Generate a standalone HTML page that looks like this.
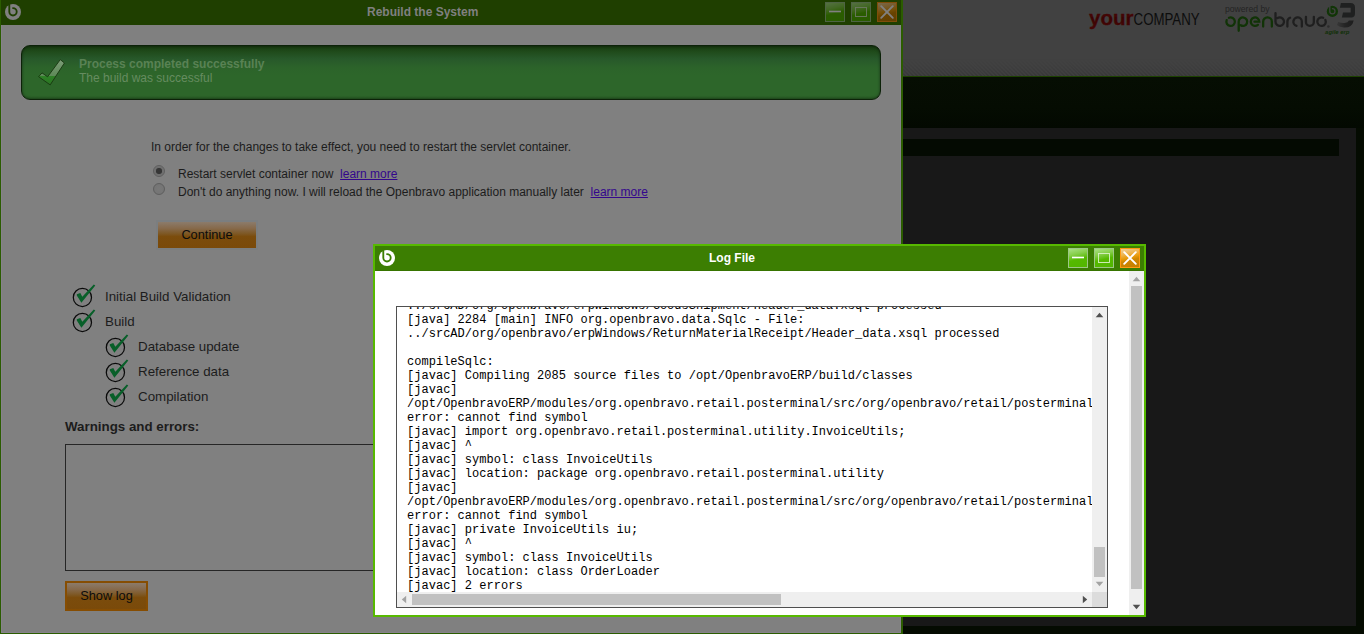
<!DOCTYPE html>
<html>
<head>
<meta charset="utf-8">
<title>Rebuild the System</title>
<style>
*{box-sizing:border-box;margin:0;padding:0}
html,body{width:1364px;height:634px;overflow:hidden;background:#040b01;font-family:"Liberation Sans",sans-serif;font-size:12px;color:#1c1c1c}
.abs{position:absolute}
/* ---------- background page (dimmed twice) ---------- */
#topbar{left:0;top:0;width:1364px;height:76px;background:#414141}
#hatch{left:0;top:58px;width:1364px;height:18px;background:linear-gradient(to bottom,rgba(0,0,0,0),rgba(0,0,8,0.10)),repeating-linear-gradient(45deg,rgba(255,255,255,0.02) 0 1.4px,rgba(0,0,0,0.035) 1.4px 2.8px);-webkit-mask-image:linear-gradient(to bottom,transparent,#000);mask-image:linear-gradient(to bottom,transparent,#000)}
#greenline{left:0;top:76px;width:1364px;height:1px;background:#1c4100}
#band{left:0;top:77px;width:1364px;height:51px;background:linear-gradient(to bottom,#060e03 0%,#050c02 60%,#030901 100%)}
#panel{left:903px;top:128px;width:453px;height:498px;background:#181818}
#strip{left:903px;top:139px;width:436px;height:17px;background:#040a02}
/* ---------- Rebuild window (dimmed once) ---------- */
#win1{left:0;top:0;width:903px;height:634px;background:#808080;border-left:1px solid #2b5c00;border-right:2px solid #2b5c00;border-bottom:1px solid #2b5c00}
#tb1{left:1px;top:0;width:900px;height:25px;background:#1f3f00}
.title{font-weight:bold;font-size:12px;line-height:14px;white-space:nowrap}
/* window buttons */
.wb{width:20px;height:20px}

.wbtn{width:20px;height:20px;border:1px solid #9dc786}
.wbtn.g{background:linear-gradient(166deg,#a9e184 0%,#86cf4a 30%,#62bf14 50%,#55b900 56%,#52b600 100%)}
.wbtn.o{border-color:#ff9a12;background:linear-gradient(166deg,#f2cf96 0%,#eeb550 28%,#e89a08 48%,#cf8600 60%,#c47e00 100%)}
.wbtn svg{position:absolute;left:-1px;top:-1px}
.dim{filter:brightness(0.5)}
#msg{left:21px;top:45px;width:860px;height:55px;border-radius:9px;border:1px solid #0c2208;background:linear-gradient(to bottom,#17390f 0%,#1f4a1a 10%,#27582a 24%,#2c632a 40%,#2d662a 55%,#2d662a 93%,#275a24 100%);box-shadow:inset 0 0 3px rgba(0,0,0,0.5)}
.t12{font-size:12px;line-height:14px;white-space:nowrap}
.t13{font-size:13.33px;line-height:15px;white-space:nowrap}
a.lm{color:#33078c;text-decoration:underline}
.radio{width:12px;height:12px;border-radius:50%;border:1px solid #5e5e5e;background:radial-gradient(circle at 50% 50%,#787878 0%,#757575 65%,#6e6e6e 100%)}
.obtn{border:2px solid #7b7e80;background:linear-gradient(to bottom,#8b7b6b 0%,#86694a 25%,#7e5824 45%,#7b4c0c 56%,#7a4a0a 100%);text-align:center;font-size:12.8px;color:#0c0c0c}
/* ---------- Log window ---------- */
#win2{left:373px;top:244px;width:773px;height:373px;background:#fff;border:2px solid #57b900}
#tb2{left:0;top:0;width:769px;height:25px;background:#3c7e02;border-bottom:1px solid #377400}

#logbox{left:21px;top:60px;width:712px;height:302px;border:1px solid #4f4f4f;background:#fff;overflow:hidden}
#logtxt{left:10px;top:-8px;font-family:"Liberation Mono",monospace;font-size:12px;line-height:14px;color:#000;white-space:pre;letter-spacing:0.024px}
.sbt{background:#efefef}
.thumb{background:#c1c1c1}
</style>
</head>
<body>
<svg width="0" height="0" style="position:absolute">
<defs>
<symbol id="oblogo" viewBox="0 0 24 24">
<circle cx="12" cy="12" r="8" fill="var(--fg)"/>
<path d="M8.3 3 L8.3 11.8 A3.7 3.7 0 1 0 12 8.1" fill="none" stroke="var(--bg)" stroke-width="1.85" stroke-linecap="round"/>
</symbol>
<symbol id="stepok" viewBox="0 0 26 26">
<circle cx="10.4" cy="15.4" r="9.1" fill="none" stroke="#0a0a0a" stroke-width="1.25"/>
<path d="M4.8 12.3 L8.3 11 L10.3 14.8 L21.8 2.6 L23.3 3.4 L9.4 20.8 L4.8 13.5 Z" fill="#085f29"/>
</symbol>
</defs>
</svg>
<!-- background page -->
<div id="topbar" class="abs"></div>
<div id="hatch" class="abs"></div>
<div id="greenline" class="abs"></div>
<div id="band" class="abs"></div>
<div id="panel" class="abs"></div>
<div id="strip" class="abs"></div>
<svg class="abs" style="left:1080px;top:0" width="284" height="45" viewBox="1080 0 284 45">
<defs><linearGradient id="yrg" x1="0" y1="0" x2="0" y2="1"><stop offset="0" stop-color="#4e0a0a"/><stop offset="0.5" stop-color="#420505"/><stop offset="0.52" stop-color="#3a0303"/><stop offset="1" stop-color="#460606"/></linearGradient>
<linearGradient id="g3" x1="0" y1="0" x2="1" y2="0"><stop offset="0" stop-color="#383838"/><stop offset="0.5" stop-color="#242424"/><stop offset="1" stop-color="#1d1d1d"/></linearGradient></defs>
<text x="1089" y="24.6" font-family="Liberation Sans,sans-serif" font-weight="bold" font-size="21" textLength="44.5" lengthAdjust="spacingAndGlyphs" fill="url(#yrg)" stroke="#420505" stroke-width="0.3">your</text>
<text x="1133.6" y="24.6" font-family="Liberation Sans,sans-serif" font-size="15.8" textLength="66" lengthAdjust="spacingAndGlyphs" fill="#0d0d0d">COMPANY</text>
<text x="1225" y="11.5" font-family="Liberation Sans,sans-serif" font-size="8.4" textLength="44.6" lengthAdjust="spacingAndGlyphs" fill="#242424">powered by</text>
<g fill="none" stroke="#113307" stroke-width="2.3" stroke-linecap="round"><path d="M1229.01 17.76 A4.25 4.25 0 1 1 1226.66 20.11"/><path d="M1238.7 30.8 L1238.7 21.7 A4.25 4.25 0 1 1 1240.70 25.30"/><path d="M1254.45 21.7 L1259.30 21.7 A4.25 4.25 0 1 0 1257.89 24.86"/><path d="M1263.15 26.6 L1263.15 21.7 A4.35 4.35 0 0 1 1271.85 21.7 L1271.85 26.6"/></g>
<g fill="none" stroke="#1f1f1f" stroke-width="2.3" stroke-linecap="round"><path d="M1275.5 13.2 L1275.5 21.7 A4.25 4.25 0 1 0 1277.50 18.10"/><path d="M1287.4 26.6 L1287.4 21.7 A4.25 4.25 0 0 1 1290.06 17.76"/><path d="M1301.85 26.6 L1301.85 21.7 A4.25 4.25 0 1 0 1296.50 25.81"/><path d="M1305.95 16.8 L1305.95 22 A3.95 3.95 0 0 0 1313.85 22 L1313.85 16.8"/><path d="M1325.40 19.90 A4.25 4.25 0 1 1 1323.14 17.76"/></g>
<circle cx="1328.4" cy="26.5" r="1.25" fill="#2c2c2c"/>
<path d="M1340.9 3.1 L1350.5 3.1 Q1355 3.1 1355 7.6 L1355 13 Q1355 17.4 1352 17.4 L1341.9 17.4 L1343 12.4 L1350.7 12.4 L1350.7 7.7 L1339.9 7.7 Z" fill="#1f2020"/>
<path d="M1353.7 20.4 Q1352.2 27.8 1344 27.5 Q1339.5 27.3 1336.8 25 L1338.2 21.9 Q1341 23.2 1344.6 23 Q1348 22.8 1348.9 20.4 Z" fill="url(#g3)"/>
<text x="1325.1" y="33.8" font-family="Liberation Sans,sans-serif" font-size="6" font-weight="bold" font-style="italic" textLength="24.4" lengthAdjust="spacingAndGlyphs" fill="#103007">agile erp</text>
</svg>
<svg class="abs" style="left:1324.05px;top:2.6px;--fg:#113507;--bg:#414141" width="16.8" height="16.8"><use href="#oblogo"/></svg>


<!-- Rebuild the System window -->
<div id="win1" class="abs"></div>
<div class="abs" style="left:1px;top:25px;width:900px;height:608px;border:1px solid #86838b;border-top:none"></div>
<div id="tb1" class="abs"></div>

<svg class="abs" style="left:1px;top:0;--fg:#808080;--bg:#1f3f00" width="24" height="24"><use href="#oblogo"/></svg>
<div class="abs title" style="left:367px;top:5px;color:#808080">Rebuild the System</div>
<div class="abs dim" style="left:825px;top:2px"><div class="wbtn g abs" style="left:0;top:0"><svg width="20" height="20"><rect x="4" y="8.7" width="12" height="1.6" fill="#fff"/></svg></div>
<div class="wbtn g abs" style="left:26px;top:0"><svg width="20" height="20"><rect x="4.5" y="5.5" width="11" height="9" fill="none" stroke="#d9f0c6" stroke-width="0.9"/></svg></div>
<div class="wbtn o abs" style="left:52px;top:0"><svg width="20" height="20"><path d="M4.2 4.2 L15.8 15.8 M15.8 4.2 L4.2 15.8" stroke="#fff" stroke-width="1.9" stroke-linecap="round"/></svg></div></div>
<div id="msg" class="abs"></div>
<svg class="abs" style="left:36px;top:57px" width="32" height="30" viewBox="0 0 32 30">
<defs><linearGradient id="ckg" x1="0" y1="0" x2="0" y2="1"><stop offset="0" stop-color="#7d9c78"/><stop offset="0.64" stop-color="#5d8a57"/><stop offset="0.65" stop-color="#2f8227"/><stop offset="1" stop-color="#2a7323"/></linearGradient></defs>
<path d="M2.6 19.7 L6 15.9 L11.6 19.8 L24.3 2.6 L28.4 6 L14.2 27.9 Z" fill="url(#ckg)" stroke="#16350f" stroke-width="0.9" stroke-linejoin="round"/>
</svg>
<div class="abs t12" style="left:79px;top:57px;color:#598254;font-weight:bold">Process completed successfully</div>
<div class="abs t12" style="left:79px;top:71px;color:#668c60">The build was successful</div>
<div class="abs t12" style="left:151px;top:140px">In order for the changes to take effect, you need to restart the servlet container.</div>
<div class="abs radio" style="left:153px;top:165px"></div>
<div class="abs" style="left:156.3px;top:168.3px;width:5.4px;height:5.4px;border-radius:50%;background:#363636;box-shadow:0 0 0 1.2px rgba(90,90,90,0.25)"></div>
<div class="abs radio" style="left:153px;top:183px"></div>
<div class="abs t12" style="left:178px;top:167px">Restart servlet container now&nbsp; <a class="lm">learn more</a></div>
<div class="abs t12" style="left:178px;top:185px">Don't do anything now. I will reload the Openbravo application manually later&nbsp; <a class="lm">learn more</a></div>
<div class="abs obtn" style="left:156px;top:220px;width:102px;height:30px;line-height:25px">Continue</div>
<svg class="abs" style="left:72px;top:282px" width="26" height="26"><use href="#stepok"/></svg>
<svg class="abs" style="left:72px;top:307px" width="26" height="26"><use href="#stepok"/></svg>
<svg class="abs" style="left:105px;top:332px" width="26" height="26"><use href="#stepok"/></svg>
<svg class="abs" style="left:105px;top:357px" width="26" height="26"><use href="#stepok"/></svg>
<svg class="abs" style="left:105px;top:382px" width="26" height="26"><use href="#stepok"/></svg>
<div class="abs t13" style="left:105px;top:289px">Initial Build Validation</div>
<div class="abs t13" style="left:105px;top:314px">Build</div>
<div class="abs t13" style="left:138px;top:339px">Database update</div>
<div class="abs t13" style="left:138px;top:364px">Reference data</div>
<div class="abs t13" style="left:138px;top:389px">Compilation</div>
<div class="abs t13" style="left:65px;top:419px;font-weight:bold">Warnings and errors:</div>
<div class="abs" style="left:65px;top:444px;width:320px;height:127px;border:1px solid #262626"></div>
<div class="abs obtn" style="left:65px;top:581px;width:83px;height:30px;line-height:25px;border-color:#864d02">Show log</div>


<!-- Log File window -->
<div id="win2" class="abs">
<div id="tb2" class="abs"></div>

<svg class="abs" style="left:0;top:0;--fg:#fff;--bg:#3c7e02" width="24" height="24"><use href="#oblogo"/></svg>
<div class="abs title" style="left:334px;top:5px;color:#fff">Log File</div>
<div class="abs" style="left:693px;top:2px"><div class="wbtn g abs" style="left:0;top:0"><svg width="20" height="20"><rect x="4" y="8.7" width="12" height="1.6" fill="#fff"/></svg></div>
<div class="wbtn g abs" style="left:26px;top:0"><svg width="20" height="20"><rect x="4.5" y="5.5" width="11" height="9" fill="none" stroke="#d9f0c6" stroke-width="0.9"/></svg></div>
<div class="wbtn o abs" style="left:52px;top:0"><svg width="20" height="20"><path d="M4.2 4.2 L15.8 15.8 M15.8 4.2 L4.2 15.8" stroke="#fff" stroke-width="1.9" stroke-linecap="round"/></svg></div></div>
<!-- outer scrollbar -->
<div class="abs sbt" style="left:754px;top:25px;width:15px;height:344px"></div>
<div class="abs thumb" style="left:756px;top:40px;width:11px;height:303px"></div>
<svg class="abs" style="left:754px;top:25px" width="15" height="15"><path d="M3.7 10.2 L7.5 5.8 L11.3 10.2 Z" fill="#a3a3a3"/></svg>
<svg class="abs" style="left:754px;top:354px" width="15" height="15"><path d="M3.7 4.8 L7.5 9.2 L11.3 4.8 Z" fill="#505050"/></svg>
<!-- log box -->
<div id="logbox" class="abs">
<div id="logtxt" class="abs">../srcAD/org/openbravo/erpWindows/GoodsShipment/Header_data.xsql processed
[java] 2284 [main] INFO org.openbravo.data.Sqlc - File:
../srcAD/org/openbravo/erpWindows/ReturnMaterialReceipt/Header_data.xsql processed

compileSqlc:
[javac] Compiling 2085 source files to /opt/OpenbravoERP/build/classes
[javac]
/opt/OpenbravoERP/modules/org.openbravo.retail.posterminal/src/org/openbravo/retail/posterminal/utility/OrderLoader.java:42:
error: cannot find symbol
[javac] import org.openbravo.retail.posterminal.utility.InvoiceUtils;
[javac] ^
[javac] symbol: class InvoiceUtils
[javac] location: package org.openbravo.retail.posterminal.utility
[javac]
/opt/OpenbravoERP/modules/org.openbravo.retail.posterminal/src/org/openbravo/retail/posterminal/utility/OrderLoader.java:88:
error: cannot find symbol
[javac] private InvoiceUtils iu;
[javac] ^
[javac] symbol: class InvoiceUtils
[javac] location: class OrderLoader
[javac] 2 errors</div>
<div class="abs sbt" style="left:695px;top:0;width:15px;height:285px"></div>
<div class="abs sbt" style="left:0;top:285px;width:695px;height:15px"></div>
<div class="abs" style="left:695px;top:285px;width:15px;height:15px;background:#dcdcdc"></div>
<div class="abs thumb" style="left:697px;top:240px;width:11px;height:30px"></div>
<div class="abs thumb" style="left:15px;top:287px;width:369px;height:11px"></div>
<svg class="abs" style="left:695px;top:0" width="15" height="15"><path d="M3.7 10.2 L7.5 5.8 L11.3 10.2 Z" fill="#505050"/></svg>
<svg class="abs" style="left:695px;top:270px" width="15" height="15"><path d="M3.7 4.8 L7.5 9.2 L11.3 4.8 Z" fill="#a3a3a3"/></svg>
<svg class="abs" style="left:-1px;top:285px" width="15" height="15"><path d="M10.2 3.7 L5.8 7.5 L10.2 11.3 Z" fill="#a3a3a3"/></svg>
<svg class="abs" style="left:681px;top:285px" width="15" height="15"><path d="M4.8 3.7 L9.2 7.5 L4.8 11.3 Z" fill="#505050"/></svg>
</div>

</div>
</body>
</html>
